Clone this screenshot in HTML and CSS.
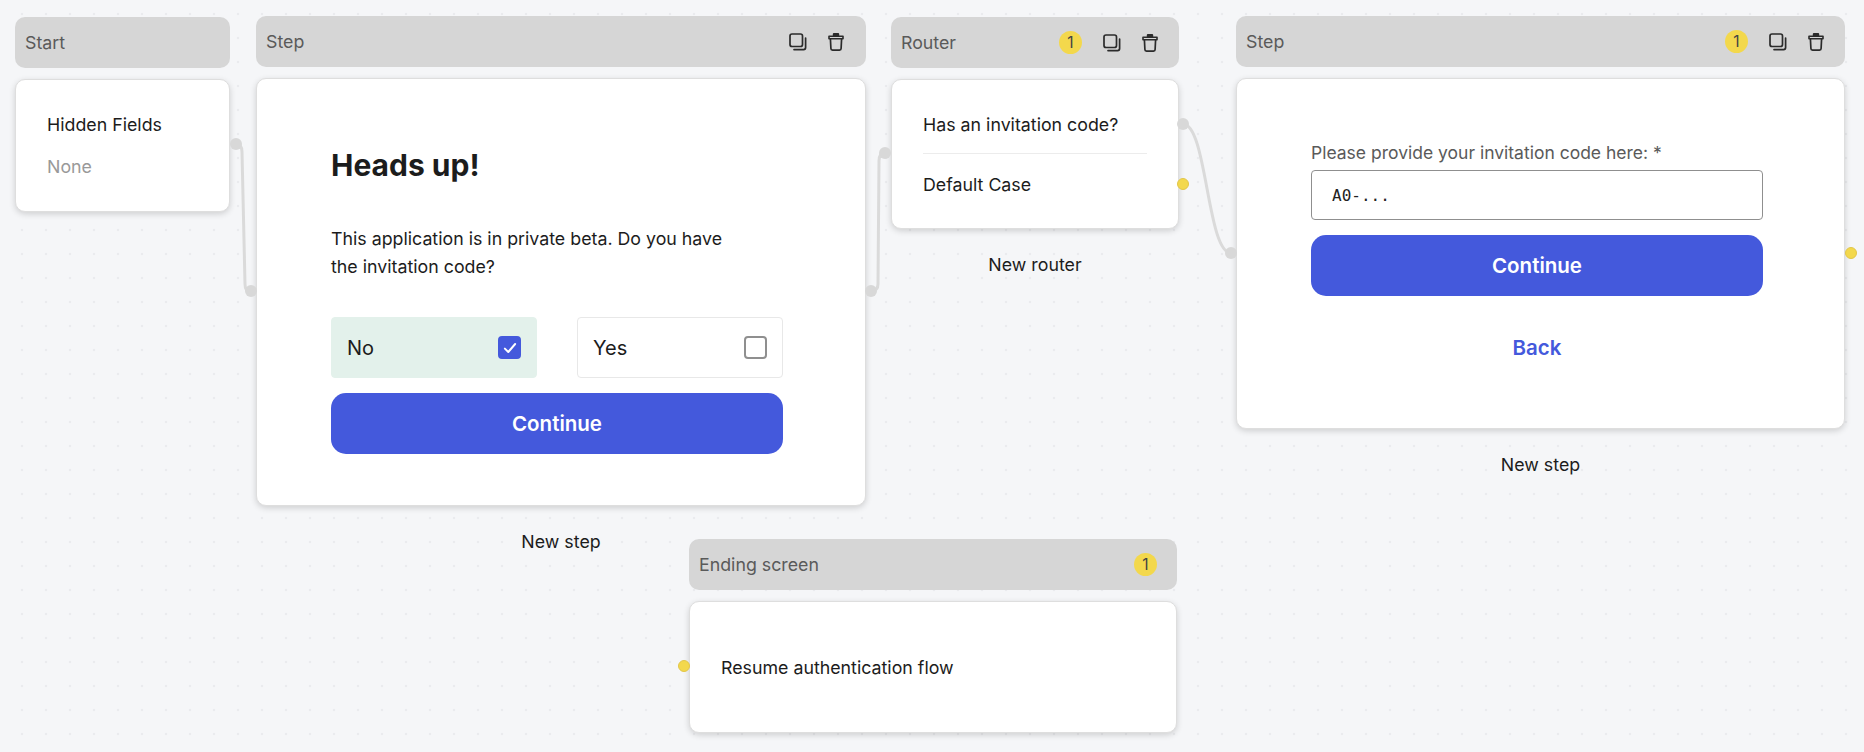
FILE: index.html
```html
<!DOCTYPE html>
<html>
<head>
  <title>Flow editor</title>
  <meta name="viewport" content="width=device-width, initial-scale=1.0">
  <link rel="stylesheet" href="styles.css">
</head>
<body>
  <svg class="icon-defs" width="0" height="0">
    <symbol id="icon-copy" viewBox="0 0 18 18">
      <rect x="1" y="1" width="12.5" height="12.5" rx="2" fill="none" stroke="currentColor" stroke-width="1.7"/>
      <path d="M16.6 5v9.6a2 2 0 0 1-2 2H5" fill="none" stroke="currentColor" stroke-width="1.7" stroke-linecap="round"/>
    </symbol>
    <symbol id="icon-trash" viewBox="0 0 16 19">
      <path d="M1 4.2h14v2.6H1z" fill="none" stroke="currentColor" stroke-width="1.6" stroke-linejoin="round"/>
      <path d="M2.4 6.8l.5 9.7a1.6 1.6 0 0 0 1.6 1.6h7a1.6 1.6 0 0 0 1.6-1.6l.5-9.7" fill="none" stroke="currentColor" stroke-width="1.7"/>
      <path d="M4.8 4V2a1 1 0 0 1 1-1h4.4a1 1 0 0 1 1 1v2z" fill="currentColor"/>
    </symbol>
  </svg>

  <div class="canvas">
    <svg class="wires" width="1864" height="752">
      <path d="M236 144Q242 144 242 152L245 284Q245 292 251 292"/>
      <path d="M871 291Q878 291 878 284L879 161Q879 153 885 153"/>
      <path d="M1183 124C1207 124 1207 253 1231 253"/>
    </svg>

    <div class="node node-start">
      <div class="node-header"><span class="node-title">Start</span></div>
      <div class="card card-start">
        <div class="hidden-title">Hidden Fields</div>
        <div class="hidden-value">None</div>
        <span class="port port-right port-start"></span>
      </div>
    </div>

    <div class="node node-step1">
      <div class="node-header">
        <span class="node-title">Step</span>
        <div class="node-tools">
          <svg class="icon-copy"><use href="#icon-copy"/></svg>
          <svg class="icon-trash"><use href="#icon-trash"/></svg>
        </div>
      </div>
      <div class="card card-step">
        <h2 class="step-heading">Heads up!</h2>
        <p class="step-text">This application is in private beta. Do you have the invitation code?</p>
        <div class="options">
          <div class="option option-on">
            <span>No</span>
            <span class="check check-on">
              <svg width="16" height="16" viewBox="0 0 14 14"><path d="M2.5 7.5l3 3 6-7" fill="none" stroke="#fff" stroke-width="1.7" stroke-linecap="round" stroke-linejoin="round"/></svg>
            </span>
          </div>
          <div class="option">
            <span>Yes</span>
            <span class="check"></span>
          </div>
        </div>
        <button class="primary">Continue</button>
        <span class="port port-left port-mid"></span>
        <span class="port port-right port-mid"></span>
      </div>
      <div class="node-label">New step</div>
    </div>

    <div class="node node-router">
      <div class="node-header">
        <span class="node-title">Router</span>
        <div class="node-tools">
          <span class="badge">1</span>
          <svg class="icon-copy"><use href="#icon-copy"/></svg>
          <svg class="icon-trash"><use href="#icon-trash"/></svg>
        </div>
      </div>
      <div class="card card-router">
        <div class="route route-first">Has an invitation code?</div>
        <div class="route">Default Case</div>
        <span class="port port-left port-router-in"></span>
        <span class="port port-right port-router-a"></span>
        <span class="port port-right port-yellow port-router-b"></span>
      </div>
      <div class="node-label">New router</div>
    </div>

    <div class="node node-step2">
      <div class="node-header">
        <span class="node-title">Step</span>
        <div class="node-tools">
          <span class="badge">1</span>
          <svg class="icon-copy"><use href="#icon-copy"/></svg>
          <svg class="icon-trash"><use href="#icon-trash"/></svg>
        </div>
      </div>
      <div class="card card-form">
        <label class="field-label" for="code">Please provide your invitation code here: *</label>
        <input class="field-input" id="code" type="text" placeholder="A0-...">
        <button class="primary">Continue</button>
        <div class="back-link">Back</div>
        <span class="port port-left port-mid2"></span>
        <span class="port port-right port-yellow port-mid2 port-form-out"></span>
      </div>
      <div class="node-label">New step</div>
    </div>

    <div class="node node-ending">
      <div class="node-header">
        <span class="node-title">Ending screen</span>
        <div class="node-tools">
          <span class="badge">1</span>
        </div>
      </div>
      <div class="card card-ending">
        <div>Resume authentication flow</div>
        <span class="port port-left port-yellow port-end"></span>
      </div>
    </div>
  </div>
</body>
</html>
```
FILE: styles.css
```css
html, body {
    margin: 0;
    padding: 0;
}

body {
    font-family: Inter, "Noto Sans", sans-serif;
    font-size: 17.8px;
    line-height: 20px;
    color: #1c1c1c;
    background-color: #f5f6f8;
}

.icon-defs {
    position: absolute;
}

.canvas {
    position: relative;
    width: 1864px;
    height: 752px;
    overflow: hidden;
    background-image: radial-gradient(circle, #eaebee 1.4px, transparent 1.6px);
    background-size: 24px 24px;
    background-position: 10px 2px;
}

.wires {
    position: absolute;
    left: 0;
    top: 0;
}

.wires path {
    fill: none;
    stroke: #dadada;
    stroke-width: 3;
}

/* nodes sit at free positions on the canvas */
.node {
    position: absolute;
}

.node-start {
    left: 15px;
    top: 17px;
    width: 215px;
}

.node-step1 {
    left: 256px;
    top: 16px;
    width: 610px;
}

.node-router {
    left: 891px;
    top: 17px;
    width: 288px;
}

.node-step2 {
    left: 1236px;
    top: 16px;
    width: 609px;
}

.node-ending {
    left: 689px;
    top: 539px;
    width: 488px;
}

.node-header {
    display: flex;
    align-items: center;
    justify-content: space-between;
    height: 51px;
    padding: 0 21px 0 10px;
    border-radius: 10px;
    background-color: #d6d6d6;
}

.node-step1 .node-header {
    padding-right: 22px;
}

.node-ending .node-header {
    padding-right: 20px;
}

.node-title {
    color: #5a5a5a;
}

.node-tools {
    display: flex;
    align-items: center;
    gap: 21px;
    color: #2b2b2b;
}

.icon-copy {
    width: 18px;
    height: 18px;
}

.icon-trash {
    width: 16px;
    height: 19px;
}

.badge {
    width: 23px;
    height: 23px;
    border-radius: 50%;
    background-color: #f3d84c;
    color: #444;
    font-size: 15.5px;
    line-height: 23px;
    text-align: center;
}

.card {
    position: relative;
    box-sizing: border-box;
    margin-top: 11px;
    border: 1px solid #dedede;
    border-radius: 10px;
    background-color: #fff;
    box-shadow: 0 2px 6px rgba(0, 0, 0, 0.16);
}

.node-label {
    margin-top: 26px;
    text-align: center;
}

.port {
    position: absolute;
    width: 12px;
    height: 12px;
    border-radius: 50%;
    background-color: #d8d8d8;
}

.port-left {
    left: -12px;
}

.port-right {
    right: -12px;
}

.port-yellow {
    box-sizing: border-box;
    background-color: #f3d84c;
    border: 1px solid #e2c64a;
}

.port-start {
    top: 58px;
    right: -13px;
}

.port-mid {
    top: 206px;
}

.port-mid2 {
    top: 168px;
}

.port-form-out {
    right: -13px;
}

.port-router-in {
    top: 67px;
    left: -13px;
}

.port-router-a {
    top: 38px;
    right: -11px;
}

.port-router-b {
    top: 98px;
    right: -11px;
}

.port-end {
    top: 58px;
}

.card-start {
    height: 133px;
    padding: 35px 31px 0;
}

.hidden-title {
    margin-bottom: 22px;
}

.hidden-value {
    color: #999;
}

.card-step {
    padding: 68px 0 51px 74px;
}

.step-heading {
    margin: 0;
    font-size: 30px;
    line-height: 36px;
    font-weight: 700;
}

.step-text {
    width: 410px;
    margin: 42px 0 36px;
    line-height: 28px;
}

.options {
    display: flex;
    justify-content: space-between;
    width: 452px;
    margin-bottom: 15px;
}

.option {
    box-sizing: border-box;
    display: flex;
    align-items: center;
    justify-content: space-between;
    width: 206px;
    height: 61px;
    padding: 0 15px;
    border: 1px solid #e8e8e8;
    border-radius: 4px;
    font-size: 20px;
}

.option-on {
    border-color: #e3f1eb;
    background-color: #e3f1eb;
}

.check {
    box-sizing: border-box;
    display: flex;
    align-items: center;
    justify-content: center;
    width: 23px;
    height: 23px;
    border: 2px solid #8f8f8f;
    border-radius: 4px;
}

.check-on {
    border-color: #4459dc;
    background-color: #4459dc;
}

.primary {
    display: block;
    width: 452px;
    height: 61px;
    border: none;
    border-radius: 15px;
    background-color: #4459dc;
    color: #fff;
    font-family: inherit;
    font-size: 20.5px;
    font-weight: 600;
}

.card-router {
    height: 150px;
    padding: 30px 31px 0;
}

.route {
    height: 30px;
    line-height: 30px;
}

.route-first {
    padding-bottom: 13px;
    margin-bottom: 16px;
    border-bottom: 1px solid #ececec;
}

.card-form {
    height: 351px;
    padding: 64px 0 0 74px;
}

.field-label {
    display: block;
    margin-bottom: 7px;
    color: #5a5a5a;
    font-size: 17.5px;
}

.field-input {
    box-sizing: border-box;
    display: block;
    width: 452px;
    height: 50px;
    margin-bottom: 15px;
    padding: 0 20px;
    border: 1px solid #8f8f8f;
    border-radius: 4px;
    font-family: "DejaVu Sans Mono", monospace;
    font-size: 16px;
}

.field-input::placeholder {
    color: #222;
    opacity: 1;
}

.back-link {
    width: 452px;
    margin-top: 42px;
    color: #4459dc;
    font-size: 20.5px;
    font-weight: 600;
    text-align: center;
}

.card-ending {
    display: flex;
    align-items: center;
    height: 132px;
    padding: 2px 0 0 31px;
}
```
